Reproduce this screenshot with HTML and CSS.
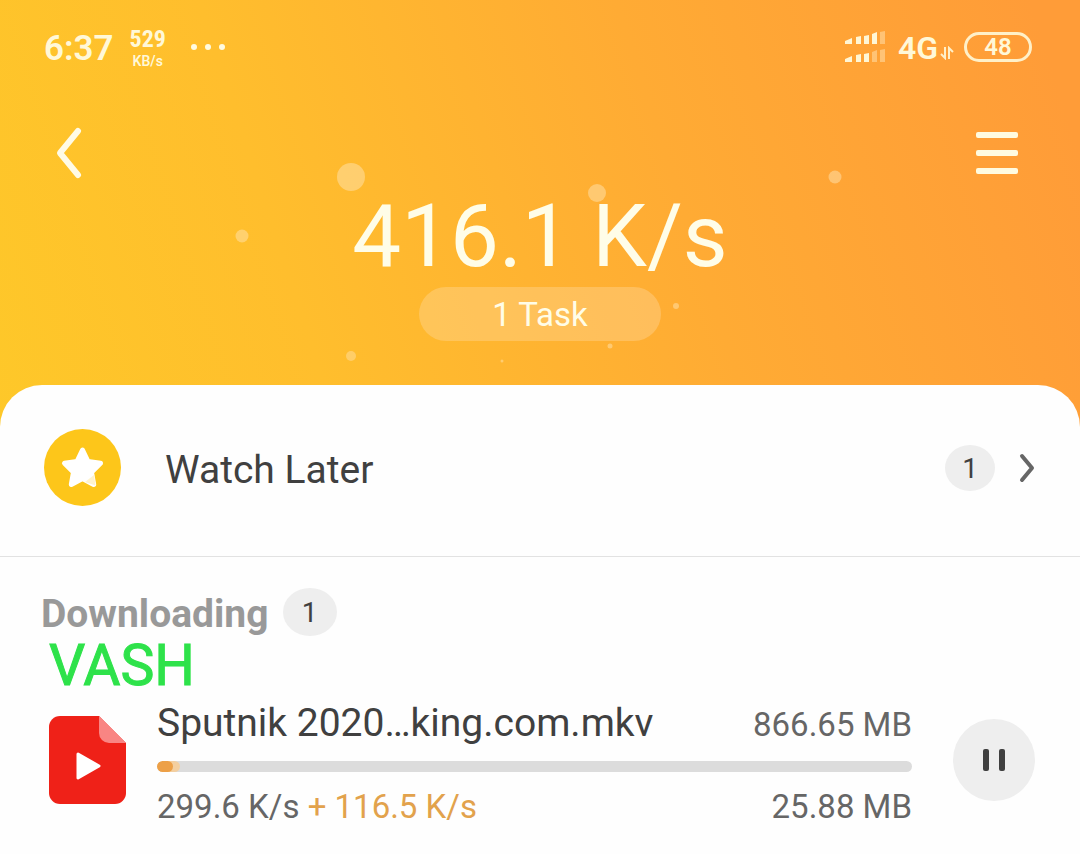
FILE: index.html
```html
<!DOCTYPE html>
<html lang="en">
<head>
<meta charset="utf-8">
<meta name="viewport" content="width=device-width, initial-scale=1">
<title>Downloads</title>
<link rel="stylesheet" href="styles.css">
</head>
<body>
<div class="app">
  <header class="hero">
    <svg class="bubbles" viewBox="0 0 1080 385" preserveAspectRatio="xMidYMin slice" aria-hidden="true">
      <g fill="#ffe3b0">
        <circle cx="351" cy="177" r="14" opacity=".5"/>
        <circle cx="242" cy="236" r="6.500" opacity=".5"/>
        <circle cx="597" cy="193" r="9" opacity=".5"/>
        <circle cx="835" cy="177" r="6.500" opacity=".5"/>
        <circle cx="351" cy="356" r="5" opacity=".45"/>
        <circle cx="676" cy="306" r="3" opacity=".5"/>
        <circle cx="610" cy="346" r="2.500" opacity=".5"/>
        <circle cx="502" cy="361" r="1.500" opacity=".5"/>
      </g>
    </svg>
    <div class="status">
      <span class="clock">6:37</span>
      <span class="rate"><b class="rate-value">529</b><span class="rate-unit">KB/s</span></span>
      <svg class="dots" width="36" height="8" viewBox="0 0 36 8" fill="#fffbe0" aria-hidden="true"><circle cx="4" cy="4" r="3"/><circle cx="18" cy="4" r="3"/><circle cx="32" cy="4" r="3"/></svg>
      <span class="spacer"></span>
      <svg class="signal" width="42" height="34" viewBox="0 0 42 34" fill="#fff6d5" aria-hidden="true">
        <path d="M1 14v-3l7-3v6zM12 14V7l5-1v8zM20 14V6l5-1v9zM28 14V4l5-2v12z"/>
        <path d="M36 14V2l5-1v13z" opacity=".4"/>
        <path d="M1 32v-3l7-3v6zM12 32v-7l5-1v8zM20 32v-8l5-1v9z"/>
        <path d="M28 32V22l5-2v12zM36 32V20l5-1v13z" opacity=".4"/>
      </svg>
      <span class="network">4G</span>
      <svg class="updown" width="14" height="14" viewBox="0 0 14 14" fill="none" stroke="#fff0c8" stroke-width="2" aria-hidden="true"><path d="M5 1v11L1 8M9 13V2l4 4"/></svg>
      <span class="battery">48</span>
    </div>
    <nav class="bar">
      <button class="icon-btn" type="button" aria-label="Back">
        <svg width="30" height="56" viewBox="0 0 30 56" fill="none" stroke="#fffbe6" stroke-width="6" stroke-linecap="round" stroke-linejoin="round"><path d="M24 6 6 28l18 22"/></svg>
      </button>
      <button class="icon-btn" type="button" aria-label="Menu">
        <svg width="42" height="42" viewBox="0 0 42 42" fill="#fffbe0"><rect width="42" height="6" rx="2"/><rect y="18" width="42" height="6" rx="2"/><rect y="36" width="42" height="6" rx="2"/></svg>
      </button>
    </nav>
    <h1 class="speed">416.1 K/s</h1>
    <div class="pill">1 Task</div>
  </header>

  <main class="panel">
    <a class="later" href="#later">
      <svg class="later-icon" width="77" height="77" viewBox="0 0 77 77" aria-hidden="true">
        <circle cx="38.500" cy="38.500" r="38.500" fill="#fdc61a"/>
        <path d="M38.500 21l5.500 11.500 12.500 1.800-9 8.800 2.200 12.400-11.200-5.900-11.200 5.900 2.200-12.400-9-8.800 12.500-1.800z" fill="#fff" stroke="#fff" stroke-width="5" stroke-linejoin="round"/>
        <path d="M41 53l9-7 1.500 10.500z" fill="#fff0c0" opacity=".8"/>
      </svg>
      <span class="later-label">Watch Later</span>
      <span class="badge">1</span>
      <svg class="chevron" width="16" height="30" viewBox="0 0 16 30" fill="none" stroke="#666" stroke-width="4" stroke-linecap="round" stroke-linejoin="round" aria-hidden="true"><path d="M3 3l10 12L3 27"/></svg>
    </a>

    <section class="downloads">
      <div class="section-head">
        <h2 class="section-title">Downloading</h2>
        <span class="badge badge-wide">1</span>
      </div>
      <p class="owner">VASH</p>
      <article class="item">
        <svg class="file" width="77" height="88" viewBox="0 0 77 88" aria-hidden="true">
          <path d="M11 0h39l27 27v50a11 11 0 0 1-11 11H11A11 11 0 0 1 0 77V11A11 11 0 0 1 11 0z" fill="#ef2118"/>
          <path d="M50 0l27 27H60a10 10 0 0 1-10-10z" fill="#f98583"/>
          <path d="M29 38l21 12-21 12z" fill="#fff" stroke="#fff" stroke-width="3" stroke-linejoin="round"/>
        </svg>
        <div class="info">
          <div class="line"><h3 class="name">Sputnik 2020…king.com.mkv</h3><span class="size size-total">866.65 MB</span></div>
          <div class="track" role="progressbar" aria-label="Download progress" aria-valuenow="3" aria-valuemin="0" aria-valuemax="100"><div class="boost" style="width:3%"><div class="fill"></div></div></div>
          <div class="line"><span class="size">299.6 K/s <span class="extra">+ 116.5 K/s</span></span><span class="size">25.88 MB</span></div>
        </div>
        <button class="pause" type="button" aria-label="Pause">
          <svg width="24" height="22" viewBox="0 0 24 22" fill="#404040"><rect x="1" width="6" height="22" rx="2"/><rect x="17" width="6" height="22" rx="2"/></svg>
        </button>
      </article>
    </section>
  </main>
</div>
</body>
</html>
```

FILE: styles.css
```css
* {
  box-sizing: border-box;
}

body {
  margin: 0;
  background: #fefefe;
  font-family: Roboto, "Liberation Sans", sans-serif;
  color: #404040;
}

h1, h2, h3, p {
  margin: 0;
  font-weight: 400;
}

button {
  border: 0;
  padding: 0;
  background: none;
  cursor: pointer;
}

svg {
  display: block;
  flex: none;
}

.app {
  min-height: 100vh;
  display: flex;
  flex-direction: column;
  background: linear-gradient(72deg, #fec829 0%, #ffbe2d 28%, #ffab34 62%, #ff9c38 96%) top / 100% 440px no-repeat;
}

.hero {
  position: relative;
  display: flex;
  flex-direction: column;
  padding-bottom: 44px;
  color: #fffde8;
}

.bubbles {
  position: absolute;
  inset: 0;
  width: 100%;
  height: 100%;
}

.status {
  position: relative;
  display: flex;
  align-items: center;
  height: 94px;
  padding: 0 48px 0 44px;
  color: #fff8d8;
}

.clock {
  padding-top: 2px;
  font-size: 35px;
  font-weight: 600;
}

.rate {
  display: flex;
  flex-direction: column;
  align-items: center;
  margin-left: 16px;
}

.rate-value {
  font: bold 24px/28px "Liberation Sans Narrow", "Roboto Condensed", Roboto, sans-serif;
}

.rate-unit {
  font-size: 14px;
  line-height: 16px;
  font-weight: 600;
}

.dots {
  margin-left: 24px;
}

.spacer {
  flex: 1;
}

.network {
  margin-left: 12px;
  padding-top: 2px;
  font-size: 32px;
  font-weight: 600;
}

.updown {
  margin: 12px 10px 0 2px;
}

.battery {
  width: 68px;
  border: 3px solid #fff0c8;
  border-radius: 15px;
  font-size: 24px;
  line-height: 24px;
  font-weight: 600;
  text-align: center;
}

.bar {
  position: relative;
  display: flex;
  justify-content: space-between;
  align-items: center;
  padding: 29px 62px 4px 54px;
}

.icon-btn {
  display: flex;
  align-items: center;
  height: 60px;
}

.speed {
  position: relative;
  padding-top: 2px;
  font-size: 87px;
  line-height: 94px;
  text-align: center;
}

.pill {
  position: relative;
  align-self: center;
  min-width: 242px;
  margin-top: 4px;
  padding-top: 2px;
  border-radius: 27px;
  background: rgba(255, 220, 170, 0.35);
  font-size: 33px;
  line-height: 52px;
  text-align: center;
}

.panel {
  flex: 1;
  border-radius: 42px 42px 0 0;
  background: #fefefe;
}

.later {
  display: flex;
  align-items: center;
  padding: 44px 45px 50px 44px;
  border-bottom: 1px solid #e2e2e2;
  color: inherit;
  text-decoration: none;
}

.later-label {
  flex: 1;
  margin-left: 44px;
  padding-top: 4px;
  font-size: 39px;
  line-height: 46px;
}

.badge {
  width: 50px;
  padding-top: 2px;
  border-radius: 50%;
  background: #eee;
  font-size: 28px;
  line-height: 44px;
  text-align: center;
}

.badge-wide {
  width: 54px;
  line-height: 46px;
}

.chevron {
  margin-left: 24px;
}

.downloads {
  padding: 31px 45px 20px 41px;
}

.section-head {
  display: flex;
  align-items: center;
  gap: 14px;
}

.section-title {
  padding-top: 4px;
  font-size: 39px;
  line-height: 44px;
  font-weight: 700;
  color: #999;
}

.owner {
  padding: 2px 0 0 8px;
  font-size: 57px;
  line-height: 56px;
  font-weight: 400;
  color: #2ee24a;
  -webkit-text-stroke: 1px #2ee24a;
}

.item {
  display: flex;
  align-items: center;
  margin-top: 6px;
  padding-left: 8px;
}

.file,
.pause {
  margin-bottom: 10px;
}

.info {
  flex: 1;
  min-width: 0;
  margin: 0 41px 0 31px;
}

.line {
  display: flex;
  align-items: center;
  justify-content: space-between;
}

.name {
  font-size: 39px;
  line-height: 46px;
}

.size {
  font-size: 33px;
  line-height: 46px;
  color: #666;
}

.size-total {
  padding-top: 4px;
  line-height: 42px;
}

.extra {
  color: #e2a24c;
}

.track {
  height: 11px;
  margin: 15px 0 12px;
  border-radius: 6px;
  background: #dcdcdc;
  overflow: hidden;
}

.boost {
  height: 100%;
  border-radius: 6px;
  background: #f3cfa0;
}

.fill {
  width: 70%;
  height: 100%;
  border-radius: 6px;
  background: #eda047;
}

.pause {
  display: flex;
  flex: none;
  align-items: center;
  justify-content: center;
  width: 82px;
  height: 82px;
  border-radius: 50%;
  background: #eee;
}
```
